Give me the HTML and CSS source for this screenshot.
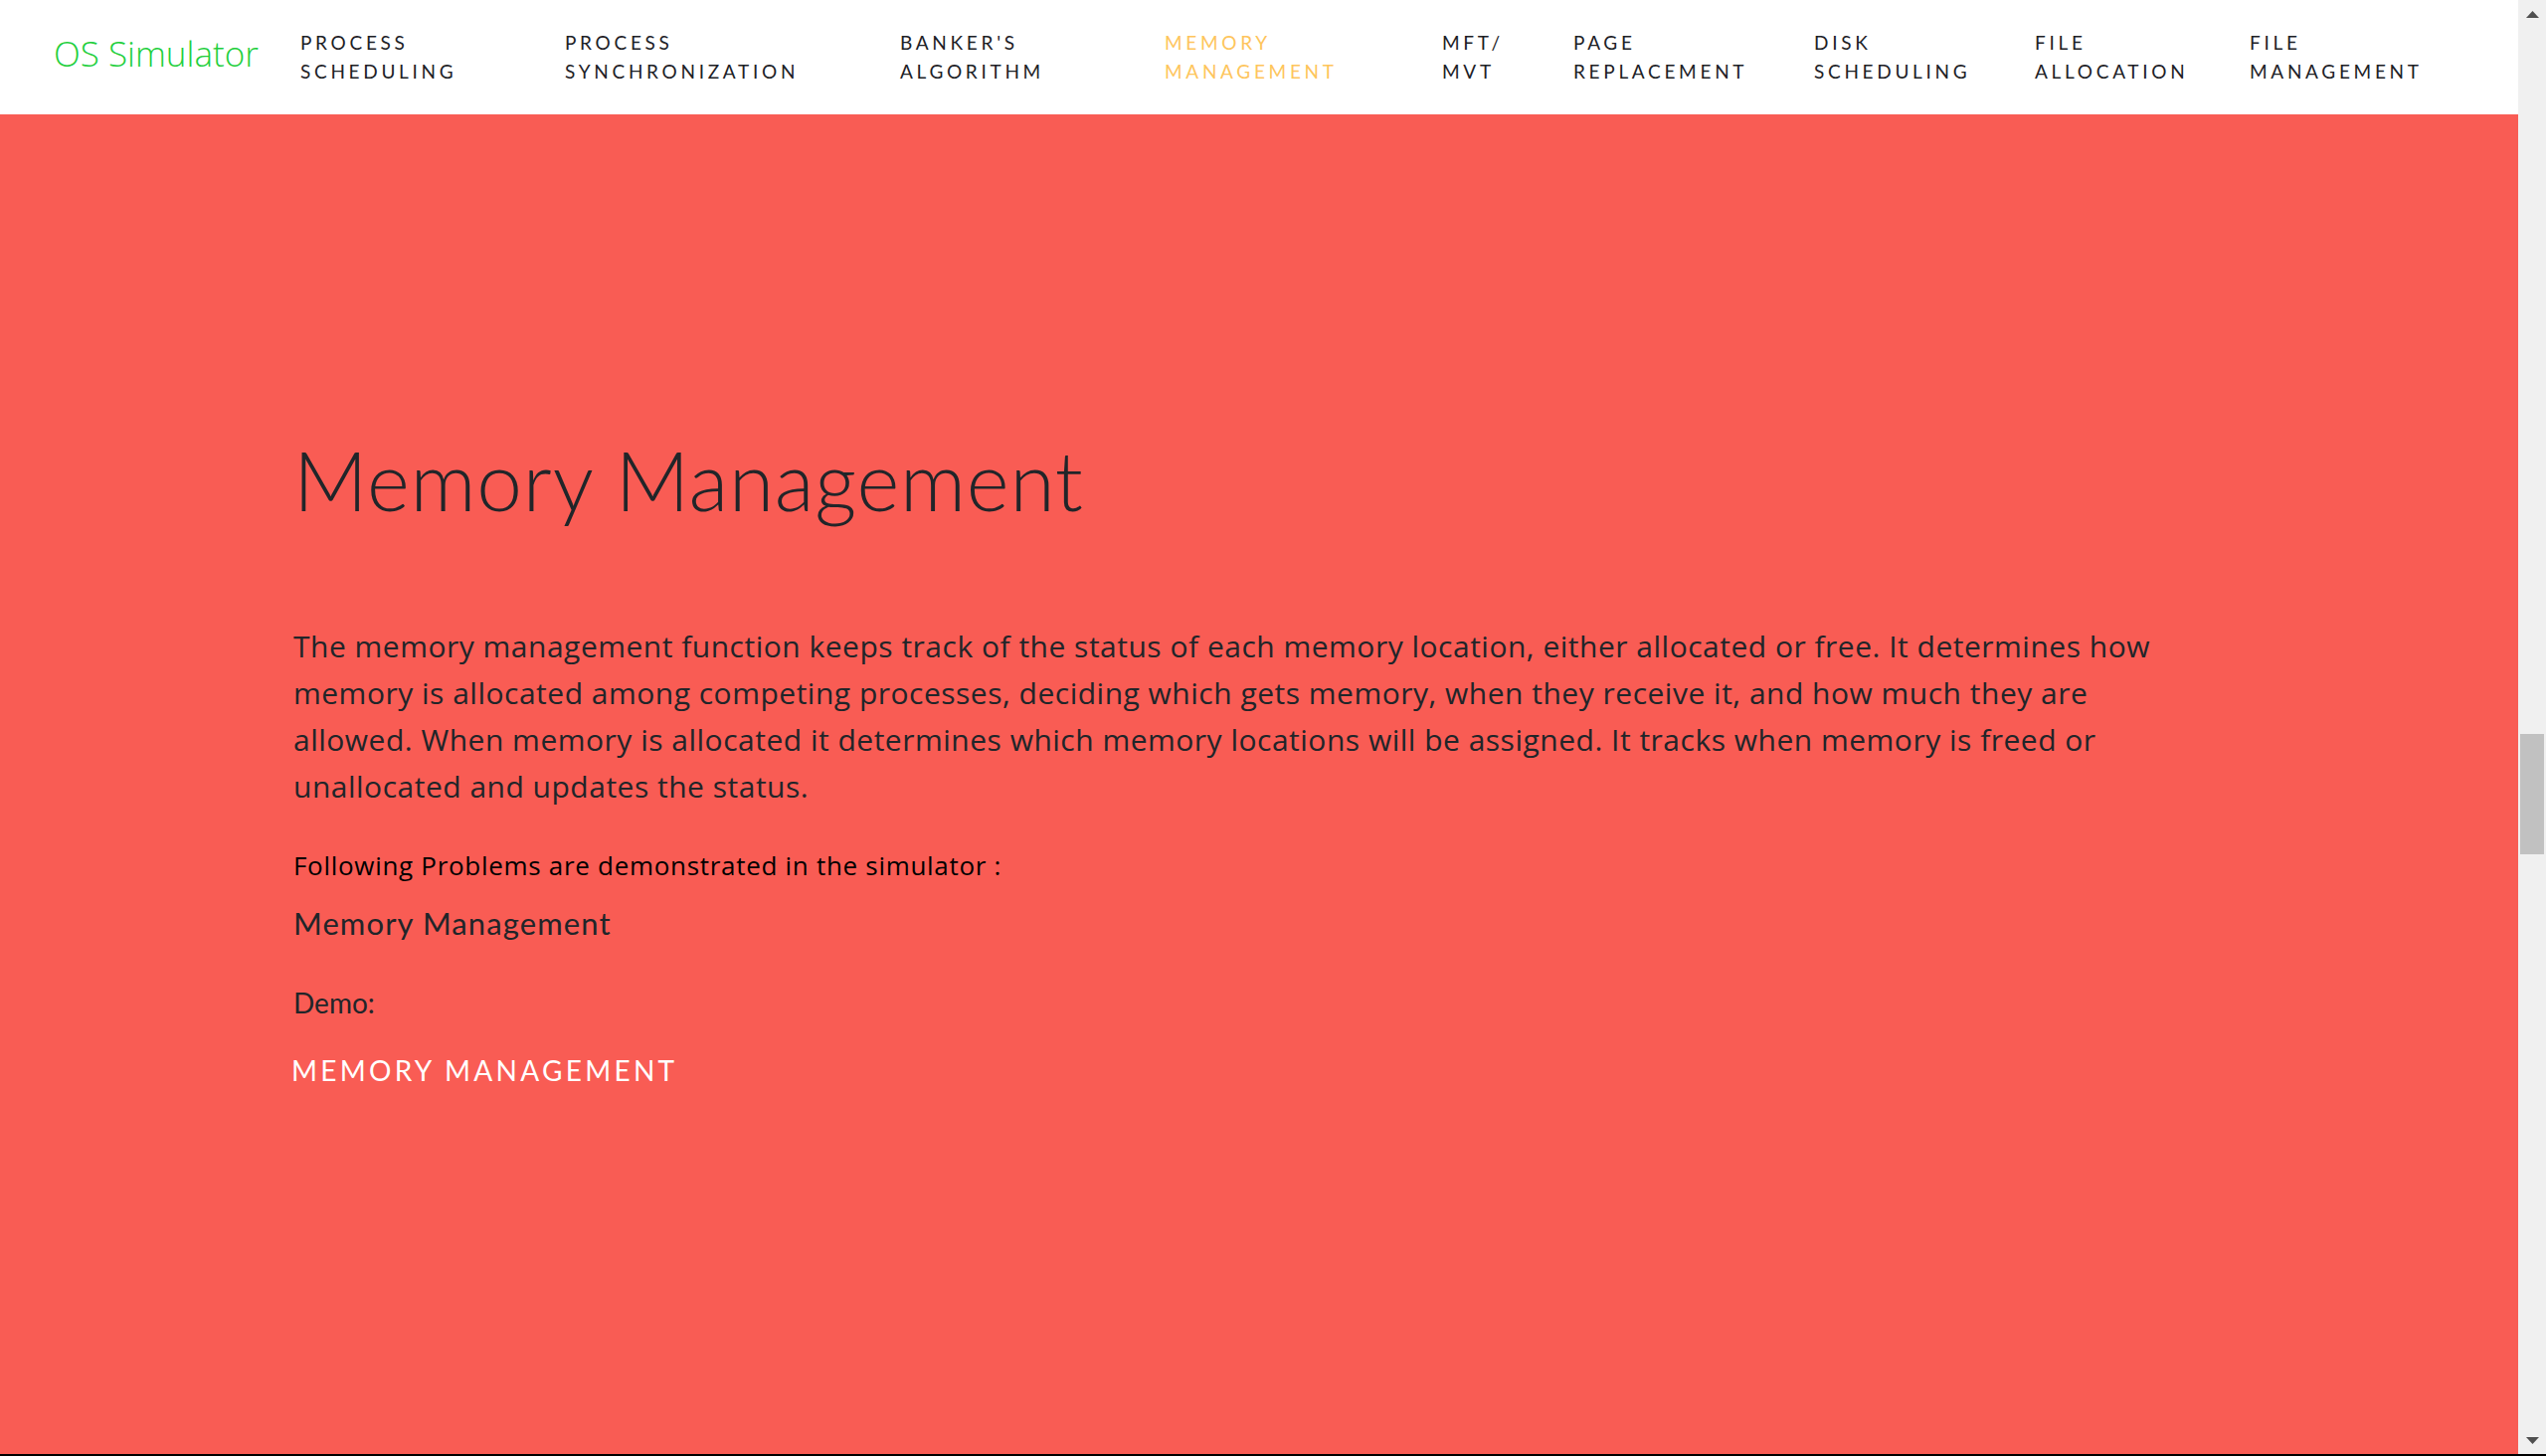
FILE: index.html
```html
<!DOCTYPE html>
<html lang="en">
<head>
<meta charset="utf-8">
<title>OS Simulator - Memory Management</title>
<link rel="stylesheet" href="styles.css">
</head>
<body>
<div class="frame">
  <div class="page">
    <header class="navbar">
      <a class="brand" href="#">OS Simulator</a>
      <nav class="nav">
        <a class="nav-link" href="#">Process<br>Scheduling</a>
        <a class="nav-link" href="#">Process<br>Synchronization</a>
        <a class="nav-link" href="#">Banker's<br>Algorithm</a>
        <a class="nav-link active" href="#">Memory<br>Management</a>
        <a class="nav-link" href="#">MFT/<br>MVT</a>
        <a class="nav-link" href="#">Page<br>Replacement</a>
        <a class="nav-link" href="#">Disk<br>Scheduling</a>
        <a class="nav-link" href="#">File<br>Allocation</a>
        <a class="nav-link" href="#">File<br>Management</a>
      </nav>
    </header>
    <main class="section">
      <div class="container">
        <h1 class="title">Memory Management</h1>
        <p class="lead">The memory management function keeps track of the status of each memory location, either allocated or free. It determines how memory is allocated among competing processes, deciding which gets memory, when they receive it, and how much they are allowed. When memory is allocated it determines which memory locations will be assigned. It tracks when memory is freed or unallocated and updates the status.</p>
        <p class="problems">Following Problems are demonstrated in the simulator :</p>
        <p class="problem-item">Memory Management</p>
        <p class="demo">Demo:</p>
        <a class="demo-link" href="#">Memory Management</a>
      </div>
    </main>
  </div>
  <div class="scrollbar">
    <div class="sb-button">
      <svg width="13" height="7" viewBox="0 0 13 7"><polygon points="6.5,0 13,7 0,7" fill="#505050"/></svg>
    </div>
    <div class="sb-track"><div class="sb-thumb"></div></div>
    <div class="sb-button sb-bottom">
      <svg width="13" height="7" viewBox="0 0 13 7"><polygon points="0,0 13,0 6.5,7" fill="#505050"/></svg>
    </div>
  </div>
</div>
</body>
</html>
```

FILE: styles.css
```css
html, body {
  margin: 0;
  padding: 0;
  overflow: hidden;
}

body {
  font-family: "Lato", "Open Sans", sans-serif;
  color: #212529;
}

.frame {
  display: flex;
  height: 1464px;
  box-sizing: border-box;
  border-bottom: 2px solid #000;
}

.page {
  flex: 1;
  display: flex;
  flex-direction: column;
  min-width: 0;
}

.navbar {
  height: 115px;
  flex: none;
  background: #fff;
  display: flex;
  align-items: center;
  padding-left: 54px;
}

.brand {
  font-family: "Open Sans", sans-serif;
  font-weight: 300;
  font-size: 35px;
  color: #22cf3c;
  text-decoration: none;
  width: 248px;
  margin-bottom: 8px;
  flex: none;
}

.nav {
  display: grid;
  grid-template-columns: 266px 337px 266px 279px 132px 242px 222px 216px auto;
  margin-top: -2px;
}

.nav-link {
  font-family: "Lato", sans-serif;
  font-size: 19px;
  line-height: 29px;
  letter-spacing: 3.7px;
  text-transform: uppercase;
  color: #1d2126;
  text-decoration: none;
  white-space: nowrap;
}

.nav-link.active {
  color: #fec55c;
}

.section {
  flex: 1;
  background: #f95c54;
}

.container {
  padding-left: 295px;
  padding-top: 318px;
  width: 1880px;
  display: flex;
  flex-direction: column;
  align-items: flex-start;
}

.title {
  margin: 0;
  font-family: "Lato", sans-serif;
  font-weight: 300;
  font-size: 82px;
  line-height: 1.2;
  letter-spacing: 0.8px;
  color: #212529;
}

.lead {
  margin: 95px 0 0;
  font-family: "Open Sans", sans-serif;
  font-size: 30px;
  line-height: 47px;
  letter-spacing: 0.5px;
  color: #212529;
}

.problems {
  margin: 37px 0 0;
  font-family: "Open Sans", sans-serif;
  font-size: 26px;
  line-height: 39px;
  letter-spacing: 0.7px;
  color: #000;
}

.problem-item {
  margin: 20px 0 0;
  font-size: 31px;
  line-height: 1.2;
  letter-spacing: 1.1px;
  color: #212529;
}

.demo {
  margin: 39px 0 0;
  font-size: 28px;
  line-height: 42px;
  color: #212529;
}

.demo-link {
  margin: 31px 0 0 -2px;
  font-size: 28px;
  line-height: 1.2;
  letter-spacing: 3.3px;
  text-transform: uppercase;
  color: #fff;
  text-decoration: none;
}

.scrollbar {
  width: 28px;
  flex: none;
  background: #f0f0f0;
  display: flex;
  flex-direction: column;
}

.sb-button {
  height: 28px;
  display: flex;
  justify-content: center;
  align-items: flex-start;
  padding-top: 11px;
  box-sizing: border-box;
}

.sb-bottom {
  align-items: flex-end;
  padding-top: 0;
  padding-bottom: 10px;
}

.sb-track {
  flex: 1;
  display: flex;
  flex-direction: column;
  align-items: center;
}

.sb-thumb {
  margin-top: 710px;
  width: 24px;
  height: 121px;
  background: #c1c1c1;
}
```
